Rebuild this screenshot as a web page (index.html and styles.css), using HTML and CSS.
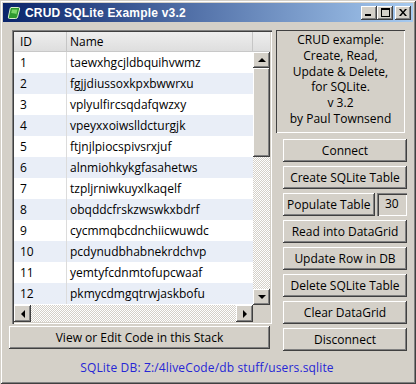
FILE: index.html
```html
<!DOCTYPE html>
<html>
<head>
<meta charset="utf-8">
<link rel="stylesheet" href="styles.css">
</head>
<body>
<div class="window">
  <div class="titlebar">
    <svg class="appicon" width="14" height="14" viewBox="0 0 14 14">
      <path d="M4 1.5 H11.5 Q13 1.5 12.6 3 L10.6 11 Q10.2 12.5 8.7 12.5 H2.5 Q1 12.5 1.4 11 L3.1 3 Q3.4 1.5 4 1.5 Z" fill="#2f9a2f" stroke="#d8f0c8" stroke-width="1"/>
      <path d="M5 3.5 H10.5 L9.3 8.5 Q8.8 7 4.2 7 Z" fill="#7cd66a"/>
    </svg>
    <span class="title">CRUD SQLite Example v3.2</span>
    <div class="tbtns">
      <div class="tbtn"><svg width="8" height="7" viewBox="0 0 8 7"><rect x="0" y="5" width="6" height="2" fill="#000"/></svg></div>
      <div class="tbtn"><svg width="9" height="9" viewBox="0 0 9 9"><rect x="0.5" y="1" width="8" height="7.5" fill="none" stroke="#000"/><rect x="0" y="0" width="9" height="2" fill="#000"/></svg></div>
      <div class="tbtn close"><svg width="8" height="7" viewBox="0 0 8 7"><path d="M0 0 L2 0 L4 2.5 L6 0 L8 0 L5 3.5 L8 7 L6 7 L4 4.5 L2 7 L0 7 L3 3.5 Z" fill="#000"/></svg></div>
    </div>
  </div>

  <div class="content">
    <div class="leftcol">
      <div class="grid">
        <div class="ghead">
          <div class="hc hid">ID</div>
          <div class="hc hname">Name</div>
          <div class="hc hcorner"></div>
        </div>
        <div class="gbody">
          <div class="rows">
            <div class="row"><span class="cid">1</span><span class="cname">taewxhgcjldbquihvwmz</span></div>
            <div class="row alt"><span class="cid">2</span><span class="cname">fgjjdiussoxkpxbwwrxu</span></div>
            <div class="row"><span class="cid">3</span><span class="cname">vplyulfircsqdafqwzxy</span></div>
            <div class="row alt"><span class="cid">4</span><span class="cname">vpeyxxoiwslldcturgjk</span></div>
            <div class="row"><span class="cid">5</span><span class="cname">ftjnjlpiocspivsrxjuf</span></div>
            <div class="row alt"><span class="cid">6</span><span class="cname">alnmiohkykgfasahetws</span></div>
            <div class="row"><span class="cid">7</span><span class="cname">tzpljrniwkuyxlkaqelf</span></div>
            <div class="row alt"><span class="cid">8</span><span class="cname">obqddcfrskzwswkxbdrf</span></div>
            <div class="row"><span class="cid">9</span><span class="cname">cycmmqbcdnchiicwuwdc</span></div>
            <div class="row alt"><span class="cid">10</span><span class="cname">pcdynudbhabnekrdchvp</span></div>
            <div class="row"><span class="cid">11</span><span class="cname">yemtyfcdnmtofupcwaaf</span></div>
            <div class="row alt"><span class="cid">12</span><span class="cname">pkmycdmgqtrwjaskbofu</span></div>
          </div>
          <div class="vscroll">
            <div class="sbtn"><span class="arr up"></span></div>
            <div class="vthumb"></div>
            <div class="track"></div>
            <div class="sbtn"><span class="arr down"></span></div>
          </div>
        </div>
        <div class="hscrollrow">
          <div class="hscroll">
            <div class="sbtn"><span class="arr left"></span></div>
            <div class="track"></div>
            <div class="sbtn"><span class="arr right"></span></div>
          </div>
          <div class="corner"></div>
        </div>
      </div>
      <div class="btn wide">View or Edit Code in this Stack</div>
    </div>

    <div class="rightcol">
      <div class="info">CRUD example:<br>Create, Read,<br>Update &amp; Delete,<br>for SQLite.<br>v 3.2<br>by Paul Townsend</div>
      <div class="btns">
        <div class="btn">Connect</div>
        <div class="btn">Create SQLite Table</div>
        <div class="poprow">
          <div class="btn pop">Populate Table</div>
          <div class="field">30</div>
        </div>
        <div class="btn">Read into DataGrid</div>
        <div class="btn">Update Row in DB</div>
        <div class="btn">Delete SQLite Table</div>
        <div class="btn">Clear DataGrid</div>
        <div class="btn">Disconnect</div>
      </div>
    </div>
  </div>

  <div class="status">SQLite DB: Z:/4liveCode/db stuff/users.sqlite</div>
</div>
</body>
</html>
```

FILE: styles.css
```css
* { box-sizing: border-box; }
html, body { margin: 0; padding: 0; }
body {
  width: 416px;
  height: 384px;
  background: #d4d0c8;
  font-family: "Open Sans", "Noto Sans", sans-serif;
  font-size: 12px;
  color: #000;
  overflow: hidden;
}
.window {
  width: 416px;
  height: 384px;
  padding: 3px;
  background: #d4d0c8;
  box-shadow: inset 1px 1px #d4d0c8, inset -1px -1px #404040, inset 2px 2px #fff, inset -2px -2px #808080;
}
.titlebar {
  height: 19px;
  display: flex;
  align-items: center;
  padding-left: 4px;
  padding-right: 2px;
  background: linear-gradient(to right, #0a246a, #a6caf0);
}
.appicon { flex: none; margin-right: 4px; }
.title {
  font-family: "Liberation Sans", Arial, sans-serif;
  font-weight: bold;
  font-size: 12px;
  color: #fff;
  flex: 1;
  letter-spacing: 0.2px;
}
.tbtns { display: flex; align-items: center; }
.tbtn {
  width: 16px;
  height: 14px;
  background: #d4d0c8;
  display: flex;
  align-items: center;
  justify-content: center;
  box-shadow: inset -1px -1px #404040, inset 1px 1px #fff, inset -2px -2px #808080;
}
.tbtn.close { margin-left: 2px; }

.content {
  display: flex;
  padding: 8px 0 0 6px;
  gap: 4px;
}
.leftcol {
  width: 263px;
  display: flex;
  flex-direction: column;
  gap: 2px;
}
.grid {
  margin-left: 3px;
  width: 260px;
  height: 294px;
  padding: 2px;
  background: #fff;
  box-shadow: inset 1px 1px #808080, inset 2px 2px #404040, inset -1px -1px #fff, inset -2px -2px #d4d0c8;
  display: flex;
  flex-direction: column;
}
.ghead {
  height: 20px;
  display: flex;
  background: linear-gradient(#eeeeee, #dedede);
  border-bottom: 1px solid #c8c8c8;
}
.hc {
  line-height: 19px;
  border-right: 1px solid #c6c6c6;
  color: #000;
}
.hid { width: 53px; padding-left: 6px; }
.hname { flex: 1; padding-left: 3px; }
.hcorner { width: 17px; border-right: none; }
.gbody {
  flex: 1;
  display: flex;
  overflow: hidden;
}
.rows { flex: 1; }
.row {
  height: 21px;
  line-height: 22px;
  display: flex;
  white-space: nowrap;
}
.row.alt { background: #e9eef7; }
.cid {
  width: 53px;
  padding-left: 6px;
  border-right: 1px solid #dcdcdc;
}
.cname { padding-left: 3px; }

.vscroll {
  width: 17px;
  display: flex;
  flex-direction: column;
}
.sbtn {
  width: 17px;
  height: 16px;
  flex: none;
  background: #d4d0c8;
  display: flex;
  align-items: center;
  justify-content: center;
  box-shadow: inset -1px -1px #404040, inset 1px 1px #fff, inset -2px -2px #808080;
}
.vthumb {
  height: 89px;
  flex: none;
  background: #d4d0c8;
  box-shadow: inset -1px -1px #404040, inset 1px 1px #fff, inset -2px -2px #808080;
}
.track {
  flex: 1;
  background-color: #fff;
  background-image: conic-gradient(#d4d0c8 25%, #fff 0 50%, #d4d0c8 0 75%, #fff 0);
  background-size: 2px 2px;
}
.arr { width: 0; height: 0; display: block; }
.arr.up { border-left: 4px solid transparent; border-right: 4px solid transparent; border-bottom: 4px solid #000; }
.arr.down { border-left: 4px solid transparent; border-right: 4px solid transparent; border-top: 4px solid #000; }
.arr.left { border-top: 4px solid transparent; border-bottom: 4px solid transparent; border-right: 4px solid #000; }
.arr.right { border-top: 4px solid transparent; border-bottom: 4px solid transparent; border-left: 4px solid #000; }
.hscrollrow {
  height: 17px;
  flex: none;
  display: flex;
}
.hscroll { flex: 1; display: flex; }
.hscroll .sbtn { height: 17px; }
.corner { width: 17px; background: #d4d0c8; }

.btn {
  height: 23px;
  background: #d4d0c8;
  display: flex;
  align-items: center;
  justify-content: center;
  white-space: nowrap;
  box-shadow: inset -1px -1px #404040, inset 1px 1px #fff, inset -2px -2px #808080;
}
.btn.wide { width: 261px; }

.rightcol {
  width: 132px;
  display: flex;
  flex-direction: column;
}
.info {
  width: 129px;
  height: 103px;
  padding-top: 2px;
  text-align: center;
  line-height: 15.8px;
  box-shadow: inset 1px 1px #404040, inset -1px -1px #fff;
}
.btns {
  margin-top: 6px;
  margin-left: 7px;
  width: 124px;
  display: flex;
  flex-direction: column;
  gap: 4px;
}
.btns .btn { height: 23px; }
.poprow { display: flex; gap: 2px; }
.btn.pop { width: 93px; }
.field {
  width: 31px;
  height: 23px;
  line-height: 22px;
  text-align: center;
  box-shadow: inset 1px 1px #808080, inset 2px 2px #404040, inset -1px -1px #fff;
}
.status {
  text-align: center;
  color: #2626d6;
  margin-top: 8px;
  padding-right: 2px;
  letter-spacing: 0.15px;
}
```
